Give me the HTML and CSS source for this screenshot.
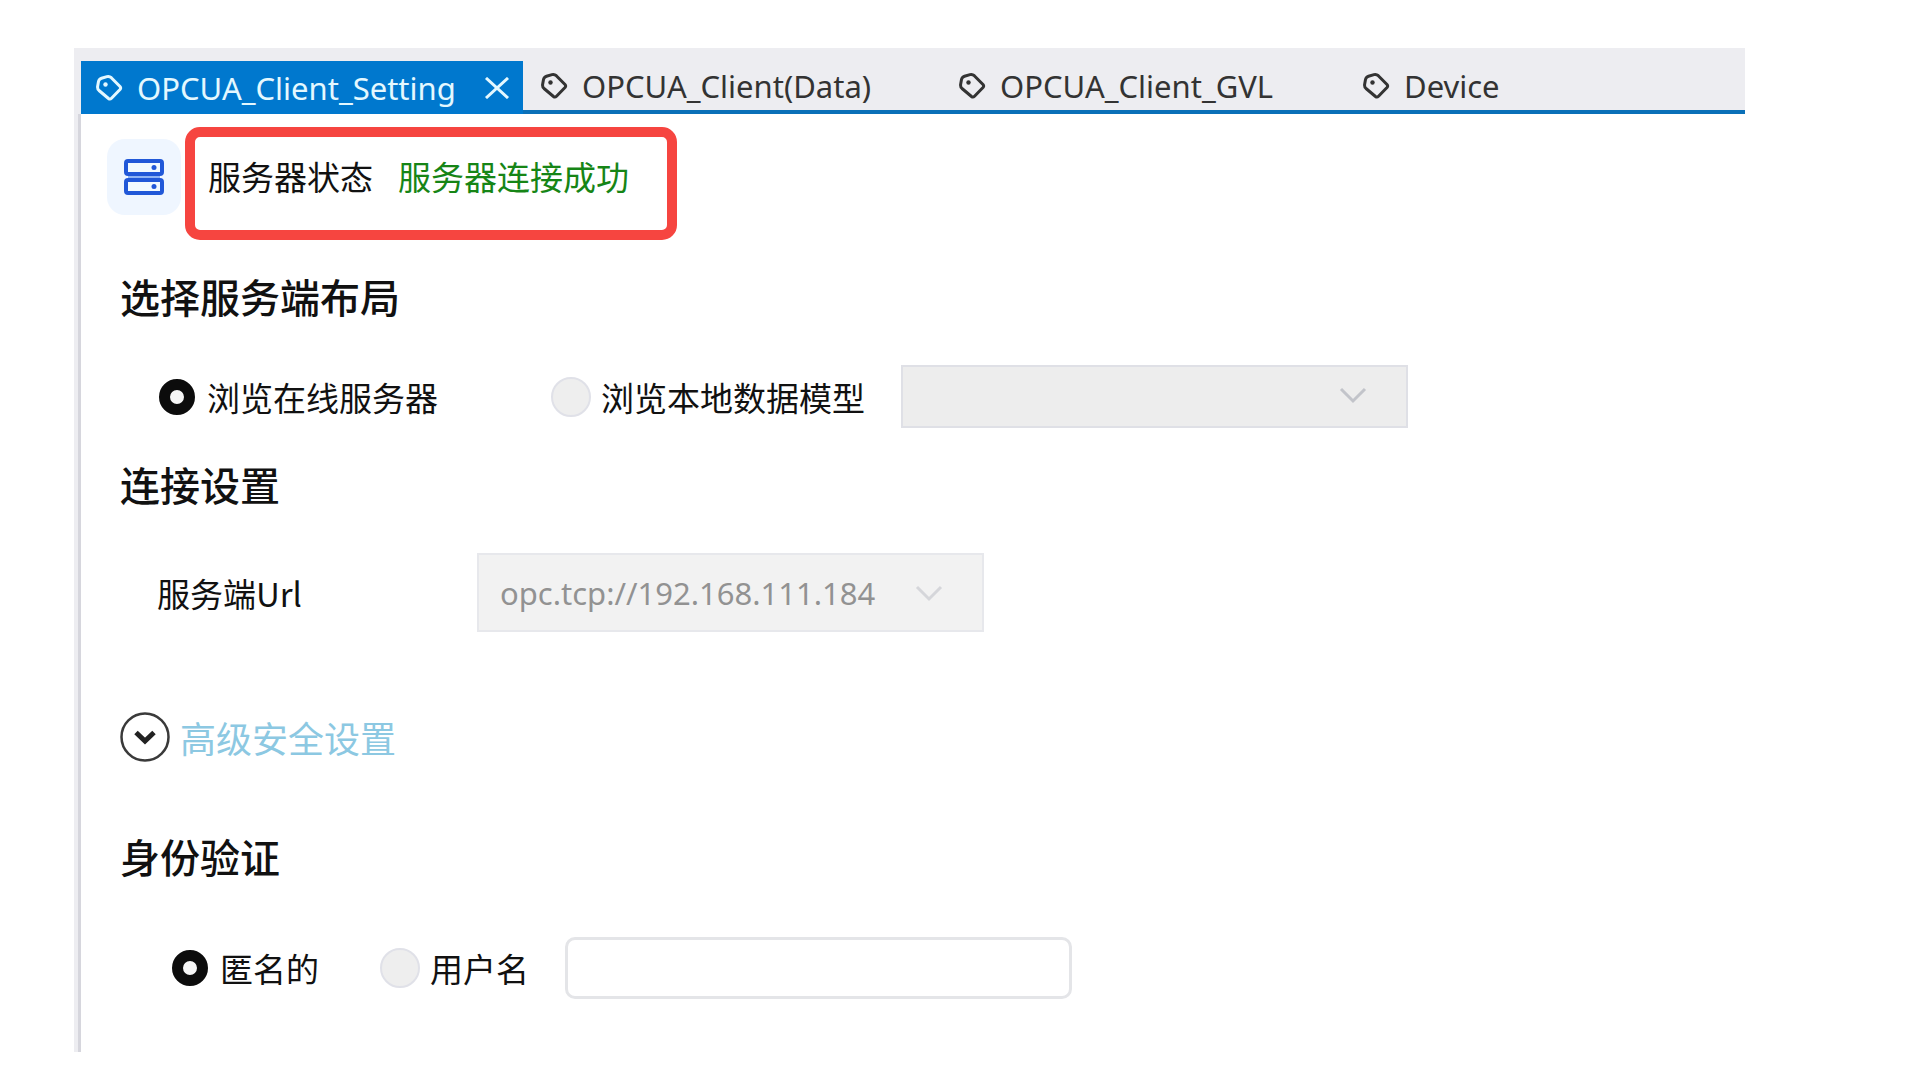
FILE: index.html
```html
<!DOCTYPE html>
<html lang="zh-CN">
<head>
<meta charset="utf-8">
<title>OPCUA_Client_Setting</title>
<link rel="stylesheet" href="styles.css">
</head>
<body>
<svg class="symbols" aria-hidden="true">
  <symbol id="tag" viewBox="0 0 28 28">
    <path d="M3.500 7.500 Q4 5 6.500 4.200 L12 2.600 Q14.500 2 16.300 3.700 L25 12.500 Q26.300 14 25 15.500 L16.500 24.200 Q15 25.700 13.500 24.500 L4 16.500 Q2.300 15 2.600 12.500 Z" fill="none" stroke="currentColor" stroke-width="3" stroke-linejoin="round"/>
    <circle cx="10.500" cy="10.500" r="2.200" fill="currentColor"/>
  </symbol>
  <symbol id="chevron" viewBox="0 0 28 18">
    <path d="M2 2 L14 14 L26 2" fill="none" stroke="currentColor" stroke-width="3"/>
  </symbol>
</svg>
<main class="window">
  <nav class="tabs">
    <div class="tab tab-active">
      <button class="tab-button" type="button"><svg class="tag"><use href="#tag"/></svg>OPCUA_Client_Setting</button>
      <button class="close" type="button" aria-label="关闭"><svg viewBox="0 0 26 22"><path d="M2 1 L24 21 M24 1 L2 21" stroke="currentColor" stroke-width="3" fill="none"/></svg></button>
    </div>
    <button class="tab tab-button tab-data" type="button"><svg class="tag"><use href="#tag"/></svg>OPCUA_Client(Data)</button>
    <button class="tab tab-button tab-gvl" type="button"><svg class="tag"><use href="#tag"/></svg>OPCUA_Client_GVL</button>
    <button class="tab tab-button" type="button"><svg class="tag"><use href="#tag"/></svg>Device</button>
  </nav>
  <form class="panel">
    <div class="status">
      <span class="server-tile">
        <svg class="server" viewBox="0 0 40 36">
          <path d="M4 18 H36" stroke="#8fb4f5" stroke-width="4"/>
          <g fill="#f2faff" stroke="#2158d8" stroke-width="4">
            <rect x="2" y="2" width="36" height="13" rx="2"/>
            <rect x="2" y="21" width="36" height="13" rx="2"/>
          </g>
          <circle cx="30" cy="8.500" r="2.500" fill="#2158d8"/>
          <circle cx="30" cy="27.500" r="2.500" fill="#2158d8"/>
        </svg>
      </span>
      <p class="status-box"><span>服务器状态</span><span class="ok">服务器连接成功</span></p>
    </div>

    <h2>选择服务端布局</h2>
    <div class="row row-layout">
      <label class="choice choice-online"><input type="radio" name="layout" checked>浏览在线服务器</label>
      <label class="choice"><input type="radio" name="layout">浏览本地数据模型</label>
      <span class="combo combo-model">
        <select disabled aria-label="数据模型"><option></option></select>
        <svg class="chevron"><use href="#chevron"/></svg>
      </span>
    </div>

    <h2>连接设置</h2>
    <div class="row row-url">
      <label class="url-label" for="url">服务端Url</label>
      <span class="combo combo-url">
        <select id="url" disabled><option>opc.tcp://192.168.111.184</option></select>
        <svg class="chevron"><use href="#chevron"/></svg>
      </span>
    </div>

    <button class="advanced" type="button">
      <svg class="expander" viewBox="0 0 50 50"><circle cx="25" cy="25" r="23.500" fill="#fff" stroke="#3a3a3a" stroke-width="2.500"/><path d="M16 20.500 L25 29 L34 20.500" fill="none" stroke="#222" stroke-width="5"/></svg>
      高级安全设置
    </button>

    <h2>身份验证</h2>
    <div class="row row-auth">
      <label class="choice choice-anonymous"><input type="radio" name="auth" checked>匿名的</label>
      <label class="choice"><input type="radio" name="auth">用户名</label>
      <input class="user" type="text" aria-label="用户名">
    </div>
  </form>
</main>
</body>
</html>
```
FILE: styles.css
```css
* { box-sizing: border-box; }

body {
  margin: 0;
  padding: 48px 175px 28px 74px;
  background: #fff;
  color: #111;
  font-family: "Noto Sans CJK SC", sans-serif;
  font-size: 33px;
  line-height: 48px;
}

button, select, input { font: inherit; color: inherit; }
button { padding: 0; border: 0; background: none; }
.symbols { position: absolute; width: 0; height: 0; }

.window {
  border-left: 4px solid #ededf1;
}

.tabs {
  display: flex;
  height: 66px;
  margin-left: 3px;
  padding-top: 13px;
  background: #ededf1;
  border-bottom: 4px solid #0a70b8;
  box-shadow: -3px 0 #ededf1;
  color: #333;
  font-family: "Noto Sans", sans-serif;
  font-size: 31px;
  line-height: 44px;
}

.tab { flex: none; padding-left: 17px; }
.tab-button { display: flex; align-items: center; gap: 14px; height: 49px; white-space: nowrap; }
.tab-data { width: 418px; }
.tab-gvl { width: 404px; }
.tag { flex: none; width: 28px; height: 28px; }

.tab-active {
  display: flex;
  align-items: center;
  justify-content: space-between;
  width: 442px;
  height: 53px;
  padding: 0 13px 0 14px;
  background: #0078ce;
  color: #e4f8ff;
}
.close { width: 26px; height: 22px; }
.close svg { display: block; width: 26px; height: 22px; }

.panel {
  padding: 13px 0 53px 26px;
  border-left: 3px solid #d6d6dd;
}

.status { display: flex; align-items: flex-start; gap: 4px; }
.server-tile {
  display: grid;
  place-items: center;
  width: 74px;
  height: 76px;
  margin-top: 12px;
  border-radius: 18px;
  background: #eff6ff;
}
.server { width: 40px; height: 36px; }
.status-box {
  display: flex;
  gap: 25px;
  width: 492px;
  height: 113px;
  margin: 0;
  padding: 15px 13px;
  border: 10px solid #f64540;
  border-radius: 15px;
}
.ok { color: #168516; }

h2 {
  margin: 32px 0 45px 13px;
  font-size: 40px;
  font-weight: 500;
  line-height: 48px;
}

.row { display: flex; align-items: center; }
.row-layout { padding-left: 50px; }
.row-url { padding-left: 50px; }
.row-auth { padding-left: 63px; }

.choice { display: flex; align-items: center; gap: 10px; white-space: nowrap; }
.choice-online { margin-right: 113px; }
.choice-anonymous { margin-right: 61px; }
.choice input {
  appearance: none;
  width: 40px;
  height: 40px;
  margin: 0;
  border: 2px solid #e0e1e8;
  border-radius: 50%;
  background: #eee;
}
.choice input:checked {
  width: 36px;
  height: 36px;
  margin: 0 2px;
  border: 11px solid #0c0c0c;
  background: #f6f6f6;
}

.combo { position: relative; width: 507px; }
.combo select {
  appearance: none;
  display: block;
  width: 100%;
  height: 63px;
  padding: 0 21px;
  border: 2px solid #dfe0e6;
  border-radius: 0;
  background: #ededed;
  color: #929292;
  opacity: 1;
}
.chevron {
  position: absolute;
  top: 22px;
  right: 41px;
  width: 28px;
  height: 18px;
  color: #c2c4ca;
}
.combo-model { margin-left: 36px; }
.combo-url select {
  height: 79px;
  background: #f2f2f2;
  border-color: #e7e8ec;
  font-family: "Noto Sans", sans-serif;
  font-size: 31px;
}
.combo-url .chevron { top: 32px; color: #d5d6da; }

.url-label { width: 320px; }

.advanced {
  display: flex;
  align-items: center;
  gap: 10px;
  margin: 80px 0 70px 13px;
  color: #8cc8e2;
  font-size: 36px;
}
.expander { width: 50px; height: 50px; }
.advanced + h2 { margin-bottom: 57px; }

.user {
  width: 507px;
  height: 62px;
  margin-left: 36px;
  padding: 0 16px;
  border: 3px solid #e4e5e8;
  border-radius: 10px;
  background: #fff;
}
```
